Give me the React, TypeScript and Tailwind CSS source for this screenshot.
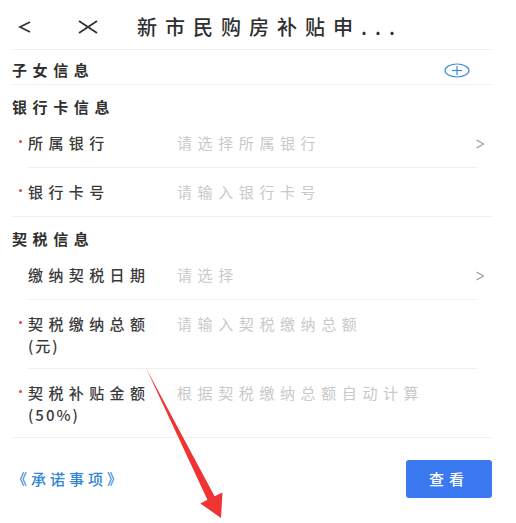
import type { ReactNode } from "react"

const FONT = { fontFamily: '"Noto Sans CJK SC", "Noto Sans", sans-serif' }

function Chevron() {
  return (
    <svg width="10" height="10" viewBox="0 0 10 10" className="-mr-2 mt-[1px] shrink-0">
      <polyline points="1.5,1 8.5,5 1.5,9" fill="none" stroke="#9a9a9a" strokeWidth="1.1" />
    </svg>
  )
}

function Required() {
  return <span className="absolute -left-[9px] top-[8px] size-[3px] rounded-full bg-[#e0464b]" />
}

type RowProps = {
  label: ReactNode
  sub?: string
  value: string
  required?: boolean
  arrow?: boolean
  full?: boolean
}

function Row({ label, sub, value, required, arrow, full }: RowProps) {
  const body = (
    <div className={sub ? "flex items-start pb-[11px] pt-[13px]" : "flex h-[48px] items-center"}>
      <div className="w-[149px] shrink-0">
        <div className="relative text-[15px] font-medium leading-[22px] tracking-[5.4px] text-[#3a3a3a]">
          {required && <Required />}
          {label}
        </div>
        {sub && (
          <div className="text-[15px] font-medium leading-[22px] tracking-[2px] text-[#3a3a3a]">{sub}</div>
        )}
      </div>
      <div className="flex-1 text-[15px] leading-[22px] tracking-[5.6px] text-[#c9c9c9]">{value}</div>
      {arrow && <Chevron />}
    </div>
  )
  if (full) {
    return <div className="border-b border-[#efefef] pl-4 pr-[15px]">{body}</div>
  }
  return <div className="ml-4 mr-[15px] border-b border-[#efefef]">{body}</div>
}

function SectionTitle({ children }: { children: ReactNode }) {
  return (
    <div className="h-[34px] pt-[11px] text-[15px] font-bold leading-[22px] tracking-[5.6px] text-[#2f2f2f]">
      {children}
    </div>
  )
}

export default function App() {
  return (
    <div className="relative h-[523px] w-full overflow-hidden bg-white" style={FONT}>
      <div className="pl-3 pr-6">
        <header className="flex h-[50px] items-center border-b border-[#f0f0f0] pt-[4px]">
          <svg width="14" height="12" viewBox="0 0 14 12" className="ml-[6px] shrink-0">
            <polyline points="12,1 2,6 12,11" fill="none" stroke="#333" strokeWidth="1.8" />
          </svg>
          <svg width="22" height="14" viewBox="0 0 22 14" className="ml-[45px] shrink-0">
            <line x1="2" y1="1" x2="20" y2="13" stroke="#333" strokeWidth="1.8" />
            <line x1="20" y1="1" x2="2" y2="13" stroke="#333" strokeWidth="1.8" />
          </svg>
          <h1 className="ml-[38px] text-[20px] font-medium tracking-[8px] text-[#2f2f2f]">新市民购房补贴申...</h1>
        </header>

        <div className="flex h-[35px] items-center justify-between border-b border-[#efefef] pt-[7px]">
          <span className="text-[15px] font-bold tracking-[5.6px] text-[#2f2f2f]">子女信息</span>
          <svg width="26" height="15" viewBox="0 0 26 15" className="mr-[22px]">
            <ellipse cx="13" cy="7.5" rx="12" ry="6.5" fill="none" stroke="#3d8bd8" strokeWidth="1.2" />
            <line x1="8" y1="7.5" x2="18" y2="7.5" stroke="#3d8bd8" strokeWidth="1.2" />
            <line x1="13" y1="3" x2="13" y2="12" stroke="#3d8bd8" strokeWidth="1.2" />
          </svg>
        </div>

        <SectionTitle>银行卡信息</SectionTitle>
        <Row label="所属银行" value="请选择所属银行" required arrow />
        <Row label="银行卡号" value="请输入银行卡号" required full />

        <SectionTitle>契税信息</SectionTitle>
        <Row label="缴纳契税日期" value="请选择" arrow />
        <Row label="契税缴纳总额" sub="(元)" value="请输入契税缴纳总额" required />
        <Row label="契税补贴金额" sub="(50%)" value="根据契税缴纳总额自动计算" required full />

        <div className="flex items-center justify-between pt-[22px]">
          <span className="text-[15px] font-medium tracking-[4px] text-[#3284d6]">《承诺事项》</span>
          <button className="h-[38px] w-[86px] rounded-[3px] bg-[#3a79f0] text-[15px] font-medium tracking-[5px] text-white">
            查看
          </button>
        </div>
      </div>

      <svg width="516" height="523" viewBox="0 0 516 523" className="pointer-events-none absolute left-0 top-0">
        <polygon
          points="146,368 214.6,496.2 222.5,492.5 221,518 200.3,503.5 207.4,499.8"
          fill="#f03434"
        />
      </svg>
    </div>
  )
}
